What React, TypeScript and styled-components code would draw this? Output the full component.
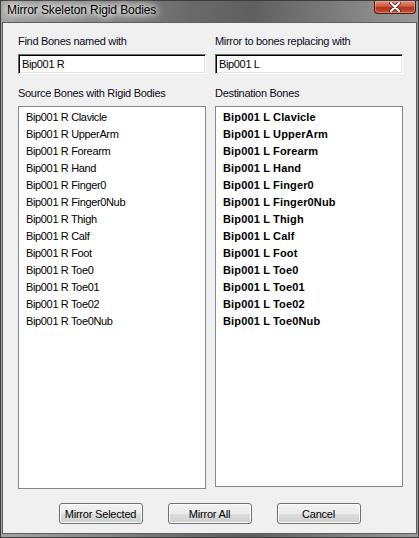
import React from "react";
import styled, { createGlobalStyle } from "styled-components";

const GlobalStyle = createGlobalStyle`
  html, body { margin: 0; padding: 0; background: #8a8a8a; }
  body { font-family: "Liberation Sans", Arial, sans-serif; }
  * { box-sizing: border-box; }
`;

const Window = styled.div`
  width: 419px;
  height: 538px;
  display: flex;
  flex-direction: column;
  background: linear-gradient(90deg, #a3a3a3 0%, #8c8c8c 20%, #6a6a6a 45%, #5f5f5f 60%, #7c7c7c 80%, #9a9a9a 100%);
  border: 1px solid #3c3c3c;
`;

const TitleBar = styled.div`
  height: 21px;
  display: flex;
  align-items: flex-start;
  padding-left: 6px;
  padding-right: 2px;
`;

const TitleText = styled.div`
  font-family: "Liberation Sans", Arial, sans-serif;
  font-size: 12px;
  letter-spacing: -0.1px;
  line-height: 18px;
  color: #000;
  text-shadow: 0 0 6px #fff, 0 0 8px #fff, 0 0 10px rgba(255,255,255,0.9);
`;

const CloseButton = styled.div`
  margin-left: auto;
  width: 42px;
  height: 13px;
  border: 1px solid #4a1a12;
  border-top: none;
  border-radius: 0 0 4px 4px;
  background: linear-gradient(180deg, #e3907f 0%, #cf5a40 45%, #b2321a 55%, #c8523a 100%);
  box-shadow: inset 0 0 0 1px rgba(255, 200, 180, 0.4);
  display: flex;
  align-items: center;
  justify-content: center;
`;

const Client = styled.div`
  flex: 1;
  margin: 0 1px 3px 1px;
  background: #f0f0f0;
  border: 1px solid #5e5e5e;
  padding: 11px 12px 0 15px;
  display: flex;
  flex-direction: column;
  font-family: "Liberation Sans", Arial, sans-serif;
  font-size: 11px;
  color: #000;
`;

const Columns = styled.div`
  display: grid;
  grid-template-columns: 188px 188px;
  column-gap: 9px;
  align-items: start;
`;

const Column = styled.div`
  display: flex;
  flex-direction: column;
`;

const Label = styled.div<{ $top?: number }>`
  height: 14px;
  line-height: 14px;
  margin-top: ${(p) => p.$top ?? 0}px;
  margin-bottom: 6px;
  letter-spacing: -0.3px;
  color: #0a0a1a;
`;

const TextBox = styled.div`
  height: 20px;
  background: #fff;
  border-style: solid;
  border-width: 1px;
  border-color: #6d6d6d #ffffff #ffffff #6d6d6d;
  box-shadow: inset 1px 1px 0 #000, inset -1px -1px 0 #e3e3e3;
  padding-left: 3px;
  line-height: 18px;
  letter-spacing: -0.35px;
  white-space: nowrap;
`;

const ListBox = styled.div<{ $height: number }>`
  height: ${(p) => p.$height}px;
  background: #fff;
  border: 1px solid #828790;
  padding: 2px 0 0 7px;
`;

const Item = styled.div<{ $bold?: boolean }>`
  height: 17px;
  line-height: 17px;
  white-space: nowrap;
  font-weight: ${(p) => (p.$bold ? 700 : 400)};
  letter-spacing: ${(p) => (p.$bold ? "0.15px" : "-0.35px")};
  color: #000;
`;

const ButtonRow = styled.div`
  display: flex;
  justify-content: center;
  gap: 25px;
  margin-top: 14px;
  padding-right: 3px;
`;

const Button = styled.div`
  width: 84px;
  height: 21px;
  border: 1px solid #707070;
  border-radius: 3px;
  background: linear-gradient(180deg, #f2f2f2 0%, #ebebeb 50%, #dddddd 51%, #cfcfcf 100%);
  box-shadow: inset 0 0 0 1px #fcfcfc;
  display: flex;
  align-items: center;
  justify-content: center;
  font-size: 11px;
  letter-spacing: -0.2px;
  color: #000;
`;

const bones = [
  "Clavicle",
  "UpperArm",
  "Forearm",
  "Hand",
  "Finger0",
  "Finger0Nub",
  "Thigh",
  "Calf",
  "Foot",
  "Toe0",
  "Toe01",
  "Toe02",
  "Toe0Nub",
];

export default function App() {
  return (
    <>
      <GlobalStyle />
      <Window>
        <TitleBar>
          <TitleText>Mirror Skeleton Rigid Bodies</TitleText>
          <CloseButton>
            <svg width="12" height="10" viewBox="0 0 12 10">
              <path d="M2 1 L10 9 M10 1 L2 9" stroke="#3a2a2a" strokeWidth="3.4" strokeLinecap="round" />
              <path d="M2 1 L10 9 M10 1 L2 9" stroke="#ffffff" strokeWidth="2" strokeLinecap="round" />
            </svg>
          </CloseButton>
        </TitleBar>
        <Client>
          <Columns>
            <Column>
              <Label>Find Bones named with</Label>
              <TextBox>Bip001 R</TextBox>
              <Label $top={12}>Source Bones with Rigid Bodies</Label>
              <ListBox $height={383}>
                {bones.map((b) => (
                  <Item key={b}>Bip001 R {b}</Item>
                ))}
              </ListBox>
            </Column>
            <Column>
              <Label>Mirror to bones replacing with</Label>
              <TextBox>Bip001 L</TextBox>
              <Label $top={12}>Destination Bones</Label>
              <ListBox $height={381}>
                {bones.map((b) => (
                  <Item key={b} $bold>
                    Bip001 L {b}
                  </Item>
                ))}
              </ListBox>
            </Column>
          </Columns>
          <ButtonRow>
            <Button>Mirror Selected</Button>
            <Button>Mirror All</Button>
            <Button>Cancel</Button>
          </ButtonRow>
        </Client>
      </Window>
    </>
  );
}
